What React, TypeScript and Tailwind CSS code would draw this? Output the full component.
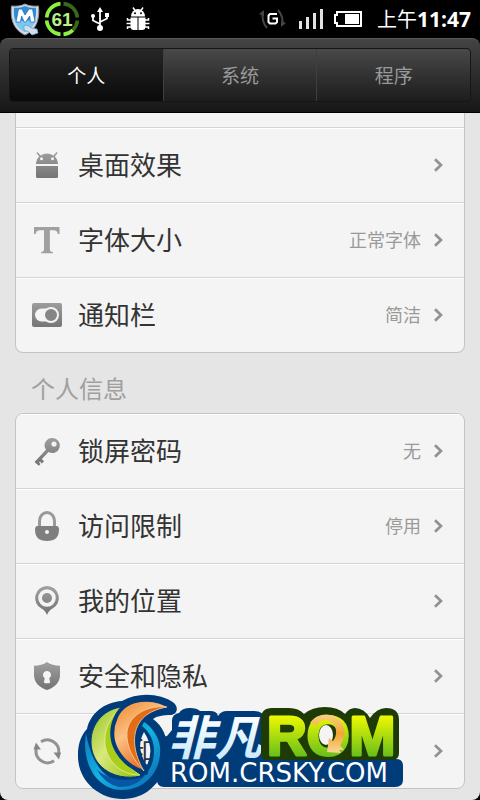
import type { ReactNode } from 'react';
import { useState } from 'react';

type Item = {
  id: string;
  label: string;
  value?: string;
  icon: ReactNode;
};

const fill = 'url(#iconFill)';

const displayItems: Item[] = [
  {
    id: 'launcher',
    label: '桌面效果',
    icon: (
      <g fill={fill}>
        <path d="M5 14a11 9.500 0 0 1 3.200-6.500L5.400 4l1-1 3.200 3.400a12 12 0 0 1 12.800 0L25.600 3l1 1-2.800 3.500A11 9.500 0 0 1 27 14v1H5z" />
        <path d="M5 17h22v10.500a1.500 1.500 0 0 1-1.500 1.500h-19A1.500 1.500 0 0 1 5 27.500z" />
        <circle cx="10.500" cy="9.700" r="1.500" fill="#f4f4f4" />
        <circle cx="21.500" cy="9.700" r="1.500" fill="#f4f4f4" />
      </g>
    ),
  },
  {
    id: 'font',
    label: '字体大小',
    value: '正常字体',
    icon: (
      <path
        fill="#a0a0a0"
        d="M3 3h25.500v7h-1.600c-.7-3-1.800-3.800-5-3.800h-3V25c0 2.200.8 2.800 3 3v1.200H10V28c2.200-.2 3-.8 3-3V6.200h-3c-3.600 0-4.700.8-5.400 3.800H3z"
      />
    ),
  },
  {
    id: 'notification',
    label: '通知栏',
    value: '简洁',
    icon: (
      <g>
        <rect x="1" y="4" width="30" height="24" rx="2" fill={fill} />
        <rect x="4" y="9.500" width="22" height="13" rx="6.500" fill="#f4f4f4" />
        <circle cx="20" cy="16" r="7" fill="#858585" stroke="#f4f4f4" strokeWidth="2" />
      </g>
    ),
  },
];

const personalItems: Item[] = [
  {
    id: 'password',
    label: '锁屏密码',
    value: '无',
    icon: (
      <path
        fill={fill}
        fillRule="evenodd"
        d="M21.500 3a7.500 7.500 0 1 1-4 13.900L10.800 24l2.200 2.200-2.200 2.200-1.800-1.900-1 1 1.500 1.500-1.700 1.700L3.500 27 15 14.800A7.500 7.500 0 0 1 21.500 3zm1.500 3.400a2.600 2.600 0 1 0 0 5.200 2.600 2.600 0 0 0 0-5.200z"
      />
    ),
  },
  {
    id: 'restriction',
    label: '访问限制',
    value: '停用',
    icon: (
      <g>
        <path d="M8.500 17v-6a7.500 8.500 0 0 1 15 0v6" fill="none" stroke="#999" strokeWidth="3" />
        <path fill="#7e7e7e" d="M6.500 16h19q2.500 0 2.500 3.500Q28 31 16 31T4 19.500Q4 16 6.500 16z" />
        <circle cx="16" cy="22" r="2" fill="#f4f4f4" />
      </g>
    ),
  },
  {
    id: 'location',
    label: '我的位置',
    icon: (
      <g fill={fill}>
        <path
          fillRule="evenodd"
          d="M16 1a12 12 0 0 1 5.500 22.600C18.500 25.200 17.500 27 16 30c-1.500-3-2.500-4.800-5.500-6.400A12 12 0 0 1 16 1zm0 3.200a8.800 8.800 0 1 0 0 17.600 8.800 8.800 0 0 0 0-17.600z"
        />
        <circle cx="16" cy="13" r="5" />
      </g>
    ),
  },
  {
    id: 'privacy',
    label: '安全和隐私',
    icon: (
      <g>
        <path
          fill={fill}
          d="M16 2c3.500 2.600 8 3.800 13 3.800V15c0 7-5 12.500-13 15C8 27.500 3 22 3 15V5.800C8 5.800 12.500 4.600 16 2z"
        />
        <path fill="#f4f4f4" d="M16 11a4 4 0 0 1 2.200 7.300l1 4.200Q16 24.200 12.800 22.500l1-4.200A4 4 0 0 1 16 11z" />
      </g>
    ),
  },
  {
    id: 'sync',
    label: '帐号和同步',
    icon: (
      <g fill="none" stroke="#929292" strokeWidth="3">
        <path d="M10 6.800A11.500 11.500 0 0 1 27.700 18" />
        <path d="M23 25.800A11.500 11.500 0 0 1 5.300 14" />
        <path fill="#858585" stroke="none" d="M22.500 17.500H30l-2 7zM10 14.500H2.500l2.500-7z" />
      </g>
    ),
  },
];

const tabs = ['个人', '系统', '程序'];

function StatusBar() {
  return (
    <div className="flex h-[38px] items-center justify-between pl-2.5 pr-[9px] text-white">
      <div className="flex items-center gap-1">
        <svg className="h-[34px] w-[30px]" viewBox="0 0 30 34">
          <path
            d="M15 2c4 2 8 2.500 13.500 2 1 11-.5 23-13.500 29C2 27 .5 15 1.500 4 7 4.500 11 4 15 2z"
            fill="#d5dbe0"
            stroke="#8d979f"
          />
          <path d="M15 4c3.500 1.600 6.500 2 11 1.800.6 9.500-1 19-11 24.200C5 25 3.400 15.300 4 5.800 8.500 6 11.500 5.600 15 4z" fill="#2d8fda" />
          <path d="M4 17c7 3 15 2 22 0-1.500 6-5 10.500-11 13-6-2.500-9.500-7-11-13z" fill="#7cc7ef" />
          <path d="M6 20 8.500 7H12l3 6 4-6h3.500L25 20h-4.500l-.8-6-4 6h-1.500l-2.600-6-1.100 6z" fill="#fff" stroke="#1b65ae" strokeWidth=".7" />
          <path d="m14 23 5 1 2 2 6 1 1 4-6 2-3-3-5-2z" fill="#d6dee4" stroke="#5ca8d8" strokeWidth=".8" />
        </svg>
        <svg className="h-9 w-9" viewBox="0 0 36 36">
          <g fill="none" strokeWidth="3.600">
            <path d="M16.500 2.600A15.500 15.500 0 0 0 2.600 16.500" stroke="#8cf043" />
            <path d="M2.600 19.500a15.500 15.500 0 0 0 13.900 13.900" stroke="#8cf043" />
            <path d="M19.500 33.400a15.500 15.500 0 0 0 9.500-4.500" stroke="#8cf043" />
            <path d="M29 28.900a15.500 15.500 0 0 0 4.400-9.400M33.400 16.500A15.500 15.500 0 0 0 19.500 2.600" stroke="#3a681b" />
          </g>
          <text x="18" y="25" textAnchor="middle" className="font-['Liberation_Sans',sans-serif] text-[19px] font-bold" fill="#b6f28b">
            61
          </text>
        </svg>
        <svg className="ml-1.5 h-6 w-5" viewBox="0 0 20 24" fill="none" stroke="#fff" strokeWidth="1.800">
          <path d="M10 20V3M10 17l-7-3.500V9M10 15l7-3.500V8" />
          <path d="m10 0 3 5H7z" fill="#fff" stroke="none" />
          <circle cx="10" cy="21" r="3" fill="#fff" stroke="none" />
          <circle cx="3" cy="9" r="2" fill="#fff" stroke="none" />
          <path d="M15 6h4v4h-4z" fill="#fff" stroke="none" />
        </svg>
        <svg className="ml-3 h-6 w-6" viewBox="0 0 24 24" fill="#fff">
          <path d="m7 .5 2 3M17 .5l-2 3M1.500 11v2H5M.5 16.500H5M1.500 22v-2H5M22.500 11v2H19M23.500 16.500H19M22.500 22v-2H19" fill="none" stroke="#fff" strokeWidth="1.500" />
          <path d="M5 9.500a7 7.500 0 0 1 14 0z" />
          <path d="M4.500 10.500h7V23H8a3.500 3.500 0 0 1-3.500-3.500zM12.500 10.500h7v9A3.500 3.500 0 0 1 16 23h-3.500z" />
          <circle cx="9" cy="6.200" r="1" fill="#000" />
          <circle cx="15" cy="6.200" r="1" fill="#000" />
        </svg>
      </div>
      <div className="flex items-center">
        <svg className="h-5 w-[27px]" viewBox="0 0 27 20" fill="none">
          <path d="M8 19Q2 12 4 3M19 1q6 7 4 15" stroke="#454545" strokeWidth="2" />
          <path d="M0 5l5-4v6zM27 14l-5 4v-6z" fill="#454545" />
          <path d="M18 5h-7L9.500 6.500v6.500l1.500 1.500h5.500L18 13v-3.500h-4.500" stroke="#fff" strokeWidth="2" />
        </svg>
        <svg className="ml-3 h-[22px] w-[26px]" viewBox="0 0 26 22" fill="#e2e2e2">
          <path d="M1 13h3v8H1zM8 9h3v12H8zM15 5h3v16h-3zM22 1h3v20h-3z" />
        </svg>
        <svg className="ml-2.5 h-4 w-7" viewBox="0 0 28 16">
          <path d="M3 1h24v14H3v-3H1V4h2z" fill="none" stroke="#fff" strokeWidth="2" />
          <path d="M11 3h14v10H11z" fill="#fff" />
        </svg>
        <p className="ml-[15px] flex items-baseline whitespace-nowrap leading-6">
          <span className="font-['Noto_Sans_CJK_SC',sans-serif] text-[20px]">上午</span>
          <span className="font-['Open_Sans',sans-serif] text-[21px] font-bold">11:47</span>
        </p>
      </div>
    </div>
  );
}

function SettingsRow({ item }: { item: Item }) {
  return (
    <li className="h-[75px] border-t border-[#d4d4d4] first:h-[74px] first:border-t-0">
      <button className="flex h-full w-full items-center border-t border-white pb-0.5 pl-[15px] pr-[21px] text-left">
        <svg className="h-8 w-8 shrink-0" viewBox="0 0 32 32">
          {item.icon}
        </svg>
        <span className="ml-[15px] flex-1 whitespace-nowrap pb-0.5 text-[26px] leading-9 text-[#333]">{item.label}</span>
        {item.value && <span className="pb-0.5 text-[18px] leading-6 text-[#9a9a9a]">{item.value}</span>}
        <svg className="ml-3 h-[14px] w-[10px]" viewBox="0 0 10 14" fill="none" stroke="#929292" strokeWidth="2.700">
          <path d="m2 1.200 6 5.800-6 5.800" />
        </svg>
      </button>
    </li>
  );
}

function RomLogo() {
  return (
    <svg className="h-[108px] w-[330px]" viewBox="76 692 330 108">
      <defs>
        <linearGradient id="ice" x1="0" y1="0" x2="0" y2="1">
          <stop offset=".2" stopColor="#fff" />
          <stop offset="1" stopColor="#bfe5fb" />
        </linearGradient>
        <linearGradient id="lime" gradientUnits="userSpaceOnUse" x1="0" y1="714" x2="0" y2="758">
          <stop offset="0" stopColor="#f4fb00" />
          <stop offset="1" stopColor="#62bd1c" />
        </linearGradient>
        <linearGradient id="leaf" x1="0" y1="0" x2="1" y2="1">
          <stop offset="0" stopColor="#8fc31f" />
          <stop offset=".45" stopColor="#d9e87c" />
          <stop offset="1" stopColor="#93bf0c" />
        </linearGradient>
        <linearGradient id="flame" x1="0" y1="0" x2=".6" y2="1">
          <stop offset="0" stopColor="#ef8022" />
          <stop offset=".45" stopColor="#fbc184" />
          <stop offset="1" stopColor="#e2590e" />
        </linearGradient>
        <linearGradient id="wave" x1="0" y1="0" x2="1" y2="1">
          <stop offset="0" stopColor="#0d6fb8" />
          <stop offset=".5" stopColor="#13b4e0" />
          <stop offset="1" stopColor="#0a62ae" />
        </linearGradient>
        <linearGradient id="gold" x1="0" y1="0" x2="0" y2="1">
          <stop offset="0" stopColor="#f9d083" />
          <stop offset=".5" stopColor="#f2a632" />
          <stop offset="1" stopColor="#fbd79a" />
        </linearGradient>
      </defs>

      {/* lettering backdrop */}
      <path
        fill="#003b7a"
        d="M172 721q0-7 7-8 3-5 11-5 7 0 10 3h10q7 0 8 5 3-5 9-5h27q10 0 10 8v40h132q7 0 7 7v14q0 7-8 7H164q-7 0-7-7v-42l10-2 5-6z"
      />

      {/* swirl */}
      <g stroke="#003b7a" strokeLinejoin="round">
        <path
          fill="#003b7a"
          fillRule="evenodd"
          stroke="none"
          d="M87 729C90 714 104 702 122 701c16-9 38-8 52 2 5 5 3 11-3 12-8 0-14 1-18 4 11 8 16 21 14 38-3 25-21 42-44 42-26 0-46-20-45-45 0-11 4-20 9-25zm57 3q-9 16 3 33 8-16-3-33z"
        />
        <path
          fill="url(#wave)"
          stroke="none"
          d="M86 733c-5 29 10 57 36 57 25 0 40-21 38-43-1-10-8-20-16-25l-2 4c8 6 12 15 12 25 0 16-8 27-20 30-22 5-41-9-48-48z"
        />
        <path fill="#0757a6" stroke="none" d="M97 770q20 16 48 6-11 12-26 11-14-3-22-17z" />
        <path fill="url(#leaf)" strokeWidth="1" d="M123 707c-17 1-32 15-32 35 0 22 20 40 50 34-24-12-38-45-18-69z" />
        <path fill="#a9ce1c" stroke="#e4f2a0" strokeWidth=".8" d="M120 709c-18 15-20 40-6 55 7 8 17 11 26 11-24-15-34-45-20-66z" />
        <path fill="url(#flame)" strokeWidth="4" d="M172 708c-18-13-47-11-56 9-11 24 4 48 30 56-17-23-21-59 26-65z" />
        <path fill="#e26c18" stroke="#ffd29b" strokeWidth=".8" d="M167 707c-20-2-38 8-40 25-1 15 7 29 17 39-14-23-17-57 23-64z" />
      </g>

      <text
        x="168"
        y="755"
        fill="url(#ice)"
        className="font-['Noto_Sans_CJK_SC',sans-serif] text-[47px] font-bold italic"
      >
        非凡
      </text>

      <path
        fill="#1e3b05"
        d="M261 719q0-11 11-11h17q10 0 15 6 8-7 21-7t20 7q4-6 10-6 9 0 15 10 7-10 16-10 13 0 13 12v33q0 7-7 7H268q-7 0-7-7z"
      />
      <ellipse cx="326" cy="735" rx="7" ry="10" fill="#f4f4f4" />
      <text
        x="267"
        y="755"
        fill="url(#lime)"
        stroke="url(#lime)"
        strokeWidth="3"
        strokeLinejoin="round"
        className="font-['Liberation_Sans',sans-serif] text-[55px] font-bold"
      >
        ROM
      </text>
      <path
        fill="url(#gold)"
        d="M310 723c8-12 27-11 33 2 3 8 1 16-3 20l4 5h-5l2 3-14-1 2-14 4 3c4-5 4-12 1-16-5-7-13-6-17 0z"
      />

      <text x="170" y="782" fill="#fff" className="font-['DejaVu_Sans',sans-serif] text-[26px]">
        ROM.CRSKY.COM
      </text>
    </svg>
  );
}

export default function App() {
  const [active, setActive] = useState(0);

  return (
    <div className="relative flex min-h-screen flex-col overflow-hidden bg-black font-['Noto_Sans_CJK_SC',sans-serif]">
      <svg className="absolute h-0 w-0">
        <linearGradient id="iconFill" gradientUnits="userSpaceOnUse" x1="0" y1="2" x2="0" y2="30">
          <stop offset="0" stopColor="#a0a0a0" />
          <stop offset="1" stopColor="#727272" />
        </linearGradient>
      </svg>

      <StatusBar />

      <header className="rounded-t-lg border-b border-t border-b-black border-t-[#5a5a5a] bg-linear-to-b from-[#444] to-[#171717] px-[9px] pb-2.5 pt-[9px]">
        <nav className="flex h-[54px] overflow-hidden rounded border border-[#151515] bg-linear-to-b from-[#494949] to-[#1d1d1d]">
          {tabs.map((tab, i) => (
            <button
              key={tab}
              onClick={() => setActive(i)}
              className={
                i === active
                  ? 'flex-1 bg-linear-to-b from-[#272727] to-[#0a0a0a] text-[19px] text-white'
                  : 'flex-1 border-l border-[#3f3f3f] text-[19px] text-[#999]'
              }
            >
              {tab}
            </button>
          ))}
        </nav>
      </header>

      <main className="flex-1 rounded-b-lg bg-[#e5e5e5] px-[15px] pb-[11px]">
        <section className="rounded-b-lg border border-t-0 border-[#c4c4c4] bg-[#f4f4f4] pt-[14px]">
          <ul className="border-t border-[#d4d4d4]">
            {displayItems.map((item) => (
              <SettingsRow key={item.id} item={item} />
            ))}
          </ul>
        </section>

        <h2 className="px-4 pb-[7px] pt-[17px] text-[24px] leading-9 text-[#a0a0a0]">个人信息</h2>

        <section className="overflow-hidden rounded-lg border border-[#c4c4c4] bg-[#f4f4f4]">
          <ul>
            {personalItems.map((item) => (
              <SettingsRow key={item.id} item={item} />
            ))}
          </ul>
        </section>
      </main>

      <div className="pointer-events-none absolute bottom-0 left-[76px]">
        <RomLogo />
      </div>
    </div>
  );
}
